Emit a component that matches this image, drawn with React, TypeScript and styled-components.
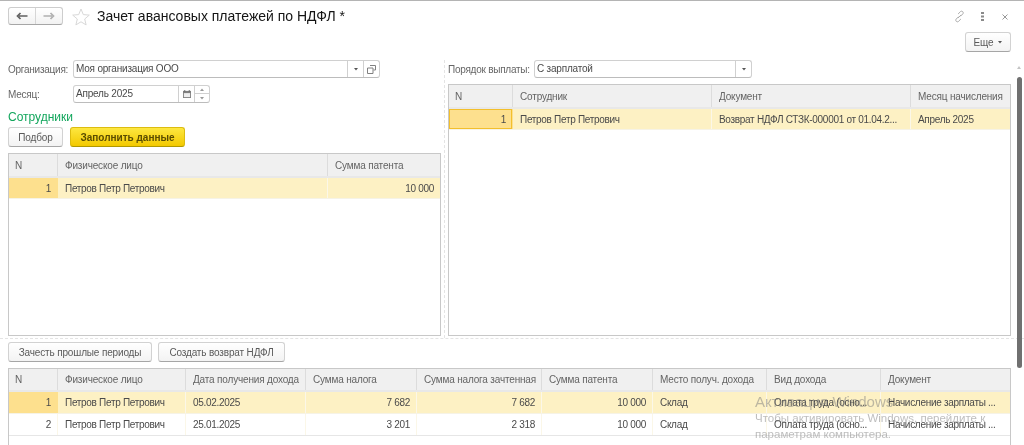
import React from "react";
import styled, { createGlobalStyle } from "styled-components";

const Global = createGlobalStyle`
  html, body { margin: 0; padding: 0; background: #fff; overflow: hidden; }
  body { font-family: "Liberation Sans", Arial, sans-serif; font-size: 10px; letter-spacing: -0.22px; color: #4a4a4a; }
  * { box-sizing: border-box; }
`;

const Page = styled.div`
  position: relative;
  width: 1024px;
  height: 445px;
  overflow: hidden;
  border-top: 1px solid #b4b4b4;
  background: #fff;
  filter: blur(0.3px);
`;
const Header = styled.header`
  display: flex;
  align-items: flex-start;
  height: 30px;
  padding: 6px 0 0 8px;
`;
const NavGroup = styled.div`
  display: flex;
  width: 55px;
  height: 18px;
  border: 1px solid #cdcdcd;
  border-bottom-color: #a6a6a6;
  border-radius: 3px;
  background: linear-gradient(#fff, #f2f2f2);
`;
const NavButton = styled.div<{ $first?: boolean }>`
  flex: 1;
  display: flex;
  align-items: center;
  justify-content: center;
  ${(p) => (p.$first ? "border-right: 1px solid #d6d6d6;" : "")}
`;
const StarWrap = styled.div`
  margin: 1px 0 0 9px;
  width: 18px;
  height: 18px;
`;
const Title = styled.h1`
  margin: 0 0 0 7px;
  font-size: 14px;
  line-height: 19px;
  letter-spacing: 0;
  font-weight: 400;
  color: #141414;
`;
const HeaderIcons = styled.div`
  margin-left: auto;
  display: flex;
  align-items: center;
  padding: 3px 16px 0 0;
`;
const IconSlot = styled.div<{ $ml: number }>`
  display: flex;
  margin-left: ${(p) => p.$ml}px;
`;
const MoreRow = styled.div`
  display: flex;
  justify-content: flex-end;
  height: 29px;
  padding: 1px 13px 0 0;
`;
const Button = styled.div<{ $w: number; $primary?: boolean }>`
  display: flex;
  align-items: center;
  justify-content: center;
  gap: 5px;
  width: ${(p) => p.$w}px;
  height: 20px;
  border: 1px solid ${(p) => (p.$primary ? "#dcbc10" : "#d2d2d2")};
  border-bottom-color: ${(p) => (p.$primary ? "#b09800" : "#a6a6a6")};
  border-radius: 3px;
  font-size: 10px;
  font-weight: ${(p) => (p.$primary ? 700 : 400)};
  letter-spacing: ${(p) => (p.$primary ? "0" : "-0.15px")};
  color: ${(p) => (p.$primary ? "#5a4c00" : "#5a5a5a")};
  background: ${(p) => (p.$primary ? "linear-gradient(#fde740, #f3c900)" : "linear-gradient(#fff, #f3f3f3)")};
`;
const Split = styled.div`
  display: grid;
  grid-template-columns: 444px 1fr;
  height: 278px;
  padding-right: 13px;
`;
const LeftPane = styled.section`
  display: flex;
  flex-direction: column;
  padding: 0 3px 2px 8px;
  min-height: 0;
`;
const RightPane = styled.section`
  display: flex;
  flex-direction: column;
  padding: 0 0 2px 3px;
  border-left: 1px dashed #e4e4e4;
  min-height: 0;
`;
const FieldRow = styled.div<{ $mb?: number }>`
  display: flex;
  align-items: center;
  height: 18px;
  flex: none;
  margin-bottom: ${(p) => p.$mb ?? 0}px;
`;
const Label = styled.span<{ $w: number }>`
  width: ${(p) => p.$w}px;
  flex: none;
  font-size: 10px;
  letter-spacing: -0.25px;
  color: #666;
  white-space: nowrap;
`;
const Field = styled.div<{ $w: number }>`
  display: flex;
  width: ${(p) => p.$w}px;
  height: 18px;
  border: 1px solid #d0d0d0;
  border-bottom-color: #bcbcbc;
  border-radius: 3px;
  background: #fff;
`;
const FieldValue = styled.div`
  flex: 1;
  padding-left: 2px;
  line-height: 16px;
  font-size: 10px;
  letter-spacing: -0.2px;
  color: #4a4a4a;
  white-space: nowrap;
`;
const FieldAddon = styled.div<{ $w: number }>`
  width: ${(p) => p.$w}px;
  flex: none;
  display: flex;
  align-items: center;
  justify-content: center;
  border-left: 1px solid #d0d0d0;
`;
const Spinner = styled.div`
  width: 15px;
  flex: none;
  display: grid;
  grid-template-rows: 1fr 1fr;
  border-left: 1px solid #d0d0d0;
`;
const SpinPart = styled.div<{ $top?: boolean }>`
  display: flex;
  align-items: center;
  justify-content: center;
  ${(p) => (p.$top ? "border-bottom: 1px solid #d0d0d0;" : "")}
`;
const GroupTitle = styled.div`
  flex: none;
  height: 24px;
  padding-top: 6px;
  font-size: 12px;
  line-height: 16px;
  letter-spacing: 0;
  color: #12a65c;
`;
const ButtonRow = styled.div<{ $gap: number }>`
  display: flex;
  gap: ${(p) => p.$gap}px;
  flex: none;
`;
const TableBox = styled.div<{ $mt: number }>`
  flex: 1;
  margin-top: ${(p) => p.$mt}px;
  border: 1px solid #c8c8c8;
  min-height: 0;
  background: #fff;
`;
const HeadRow = styled.div<{ $cols: string; $h: number }>`
  display: grid;
  grid-template-columns: ${(p) => p.$cols};
  height: ${(p) => p.$h}px;
  background: #f0f0f0;
  border-bottom: 2px solid #e8e8e8;
`;
const HeadCell = styled.div`
  display: flex;
  align-items: center;
  padding-left: 7px;
  border-right: 1px solid #dcdcdc;
  font-size: 10px;
  letter-spacing: -0.17px;
  color: #646464;
  white-space: nowrap;
  overflow: hidden;
  &:first-child { padding-left: 6px; }
  &:last-child { border-right: 0; }
`;
const BodyRow = styled.div<{ $cols: string; $selected?: boolean; $h: number }>`
  display: grid;
  grid-template-columns: ${(p) => p.$cols};
  height: ${(p) => p.$h}px;
  background: ${(p) => (p.$selected ? "#fdf1c4" : "#fff")};
  border-bottom: 1px solid ${(p) => (p.$selected ? "#f6f3e6" : "#e6e6e6")};
`;
const Cell = styled.div<{ $right?: boolean; $marker?: boolean; $focus?: boolean }>`
  display: flex;
  align-items: center;
  justify-content: ${(p) => (p.$right ? "flex-end" : "flex-start")};
  padding: 0 6px 0 7px;
  border-right: 1px solid ${(p) => (p.$marker || p.$focus ? "transparent" : "#fbf7e8")};
  font-size: 10px;
  letter-spacing: -0.3px;
  color: #4a4a4a;
  white-space: nowrap;
  overflow: hidden;
  background: ${(p) => (p.$marker || p.$focus ? "#fde08e" : "transparent")};
  ${(p) => (p.$focus ? "box-shadow: inset 0 0 0 1px #f3bf2c;" : "")}
  &:last-child { border-right: 0; }
`;
const BottomSection = styled.section`
  border-top: 1px dashed #e4e4e4;
  padding: 3px 13px 0 8px;
`;
const BottomTable = styled.div`
  margin-top: 6px;
  border: 1px solid #c8c8c8;
  border-bottom: 0;
  height: 80px;
`;
const ScrollTrack = styled.div`
  position: absolute;
  top: 65px;
  right: 2px;
  width: 5px;
  height: 302px;
`;
const ScrollUp = styled.div`
  position: absolute;
  top: 0;
  left: 0;
  width: 0;
  height: 0;
  border: 2.500px solid transparent;
  border-top: 0;
  border-bottom: 3px solid #c4c4c4;
`;
const ScrollThumb = styled.div`
  position: absolute;
  top: 11px;
  left: 0;
  width: 5px;
  bottom: 0;
  border-radius: 3px;
  background: #707070;
`;
const Watermark = styled.div`
  position: absolute;
  left: 755px;
  top: 391px;
  letter-spacing: 0;
  color: rgba(125, 125, 125, 0.5);
  pointer-events: none;
`;
const WatermarkTitle = styled.div`
  font-size: 15px;
  line-height: 20px;
  margin-bottom: -2px;
`;
const WatermarkText = styled.div`
  font-size: 11.500px;
  line-height: 16px;
  white-space: nowrap;
`;

const Arrow = ({ left, color }: { left?: boolean; color: string }) => (
  <svg width="12" height="8" viewBox="0 0 12 8">
    <path d={left ? "M11.500 4H3M4.500 1L1.500 4l3 3" : "M.5 4H9M7.500 1l3 3-3 3"} fill="none" stroke={color} strokeWidth="1.700" />
  </svg>
);
const Star = () => (
  <svg width="18" height="18" viewBox="0 0 18 18">
    <path d="M9 1l2.300 5.600 6 .5-4.600 3.900 1.400 5.900L9 13.800l-5.100 3.100 1.400-5.900L.7 7.100l6-.5z" fill="#fff" stroke="#d8d8d8" strokeWidth="1" />
  </svg>
);
const Link = () => (
  <svg width="13" height="13" viewBox="0 0 14 14">
    <g fill="none" stroke="#a6a6a6" strokeWidth="1">
      <path d="M6 7.200L3.300 9.900a1.800 1.800 0 0 0 2.500 2.500l2.700-2.700" />
      <path d="M8 6.800l2.700-2.700a1.800 1.800 0 0 0-2.500-2.500L5.500 4.300" />
      <path d="M5.300 8.700l3.400-3.400" />
    </g>
  </svg>
);
const Dots = () => (
  <svg width="3" height="9" viewBox="0 0 3 9">
    <g fill="#8a8a8a">
      <rect x="0" y="0" width="3" height="2" />
      <rect x="0" y="3.500" width="3" height="2" />
      <rect x="0" y="7" width="3" height="2" />
    </g>
  </svg>
);
const Close = () => (
  <svg width="6" height="6" viewBox="0 0 6 6">
    <path d="M.5.500l5 5M5.500.500l-5 5" stroke="#999" strokeWidth="1" />
  </svg>
);
const Tri = ({ up, muted }: { up?: boolean; muted?: boolean }) => (
  <svg width="4" height="3" viewBox="0 0 4 3">
    <path d={up ? "M2 .5L4 3H0z" : "M0 0h4L2 2.500z"} fill={muted ? "#999" : "#555"} />
  </svg>
);
const OpenIcon = () => (
  <svg width="9" height="9" viewBox="0 0 9 9">
    <path d="M3 .5h5.500V5H6.500M.5 3h5.500v5.500H.5z" fill="none" stroke="#808080" strokeWidth="1" />
  </svg>
);
const Calendar = () => (
  <svg width="8" height="8" viewBox="0 0 9 9">
    <rect x="0" y="1" width="9" height="8" fill="#808080" />
    <rect x="1" y="3.500" width="7" height="4.500" fill="#eee" />
    <rect x="1.500" y="0" width="1" height="2" fill="#666" />
    <rect x="6.500" y="0" width="1" height="2" fill="#666" />
  </svg>
);

const leftCols = "49px 270px 1fr";
const rightCols = "64px 199px 199px 1fr";
const bottomCols = "49px 128px 120px 111px 125px 111px 114px 114px 1fr";

type Row = { text: string; right?: boolean }[];
const bottomHead = ["N", "Физическое лицо", "Дата получения дохода", "Сумма налога", "Сумма налога зачтенная", "Сумма патента", "Место получ. дохода", "Вид дохода", "Документ"];
const bottomRows: Row[] = [
  [
    { text: "1", right: true }, { text: "Петров Петр Петрович" }, { text: "05.02.2025" }, { text: "7 682", right: true },
    { text: "7 682", right: true }, { text: "10 000", right: true }, { text: "Склад" }, { text: "Оплата труда (осно..." }, { text: "Начисление зарплаты ..." },
  ],
  [
    { text: "2", right: true }, { text: "Петров Петр Петрович" }, { text: "25.01.2025" }, { text: "3 201", right: true },
    { text: "2 318", right: true }, { text: "10 000", right: true }, { text: "Склад" }, { text: "Оплата труда (осно..." }, { text: "Начисление зарплаты ..." },
  ],
];

export default function App() {
  return (
    <Page>
      <Global />
      <Header>
        <NavGroup>
          <NavButton $first><Arrow left color="#606060" /></NavButton>
          <NavButton><Arrow color="#b0b0b0" /></NavButton>
        </NavGroup>
        <StarWrap><Star /></StarWrap>
        <Title>Зачет авансовых платежей по НДФЛ *</Title>
        <HeaderIcons>
          <Link />
          <IconSlot $ml={15}><Dots /></IconSlot>
          <IconSlot $ml={18}><Close /></IconSlot>
        </HeaderIcons>
      </Header>
      <MoreRow>
        <Button $w={46}>
          Еще<Tri />
        </Button>
      </MoreRow>
      <Split>
        <LeftPane>
          <FieldRow $mb={7}>
            <Label $w={65}>Организация:</Label>
            <Field $w={307}>
              <FieldValue>Моя организация ООО</FieldValue>
              <FieldAddon $w={16}><Tri /></FieldAddon>
              <FieldAddon $w={16}><OpenIcon /></FieldAddon>
            </Field>
          </FieldRow>
          <FieldRow>
            <Label $w={65}>Месяц:</Label>
            <Field $w={137}>
              <FieldValue>Апрель 2025</FieldValue>
              <FieldAddon $w={16}><Calendar /></FieldAddon>
              <Spinner>
                <SpinPart $top><Tri up muted /></SpinPart>
                <SpinPart><Tri muted /></SpinPart>
              </Spinner>
            </Field>
          </FieldRow>
          <GroupTitle>Сотрудники</GroupTitle>
          <ButtonRow $gap={7}>
            <Button $w={55}>Подбор</Button>
            <Button $w={115} $primary>Заполнить данные</Button>
          </ButtonRow>
          <TableBox $mt={6}>
            <HeadRow $cols={leftCols} $h={24}>
              <HeadCell>N</HeadCell>
              <HeadCell>Физическое лицо</HeadCell>
              <HeadCell>Сумма патента</HeadCell>
            </HeadRow>
            <BodyRow $cols={leftCols} $h={21} $selected>
              <Cell $right $marker>1</Cell>
              <Cell>Петров Петр Петрович</Cell>
              <Cell $right>10 000</Cell>
            </BodyRow>
          </TableBox>
        </LeftPane>
        <RightPane>
          <FieldRow>
            <Label $w={86}>Порядок выплаты:</Label>
            <Field $w={218}>
              <FieldValue>С зарплатой</FieldValue>
              <FieldAddon $w={16}><Tri /></FieldAddon>
            </Field>
          </FieldRow>
          <TableBox $mt={6}>
            <HeadRow $cols={rightCols} $h={24}>
              <HeadCell>N</HeadCell>
              <HeadCell>Сотрудник</HeadCell>
              <HeadCell>Документ</HeadCell>
              <HeadCell>Месяц начисления</HeadCell>
            </HeadRow>
            <BodyRow $cols={rightCols} $h={21} $selected>
              <Cell $right $focus>1</Cell>
              <Cell>Петров Петр Петрович</Cell>
              <Cell>Возврат НДФЛ СТЗК-000001 от 01.04.2...</Cell>
              <Cell>Апрель 2025</Cell>
            </BodyRow>
          </TableBox>
        </RightPane>
      </Split>
      <BottomSection>
        <ButtonRow $gap={6}>
          <Button $w={144}>Зачесть прошлые периоды</Button>
          <Button $w={127}>Создать возврат НДФЛ</Button>
        </ButtonRow>
        <BottomTable>
          <HeadRow $cols={bottomCols} $h={23}>
            {bottomHead.map((h) => <HeadCell key={h}>{h}</HeadCell>)}
          </HeadRow>
          {bottomRows.map((r, i) => (
            <BodyRow key={i} $cols={bottomCols} $h={22} $selected={i === 0}>
              {r.map((c, j) => (
                <Cell key={j} $right={c.right} $marker={i === 0 && j === 0}>{c.text}</Cell>
              ))}
            </BodyRow>
          ))}
        </BottomTable>
      </BottomSection>
      <ScrollTrack><ScrollUp /><ScrollThumb /></ScrollTrack>
      <Watermark>
        <WatermarkTitle>Активация Windows</WatermarkTitle>
        <WatermarkText>Чтобы активировать Windows, перейдите к</WatermarkText>
        <WatermarkText>параметрам компьютера.</WatermarkText>
      </Watermark>
    </Page>
  );
}
